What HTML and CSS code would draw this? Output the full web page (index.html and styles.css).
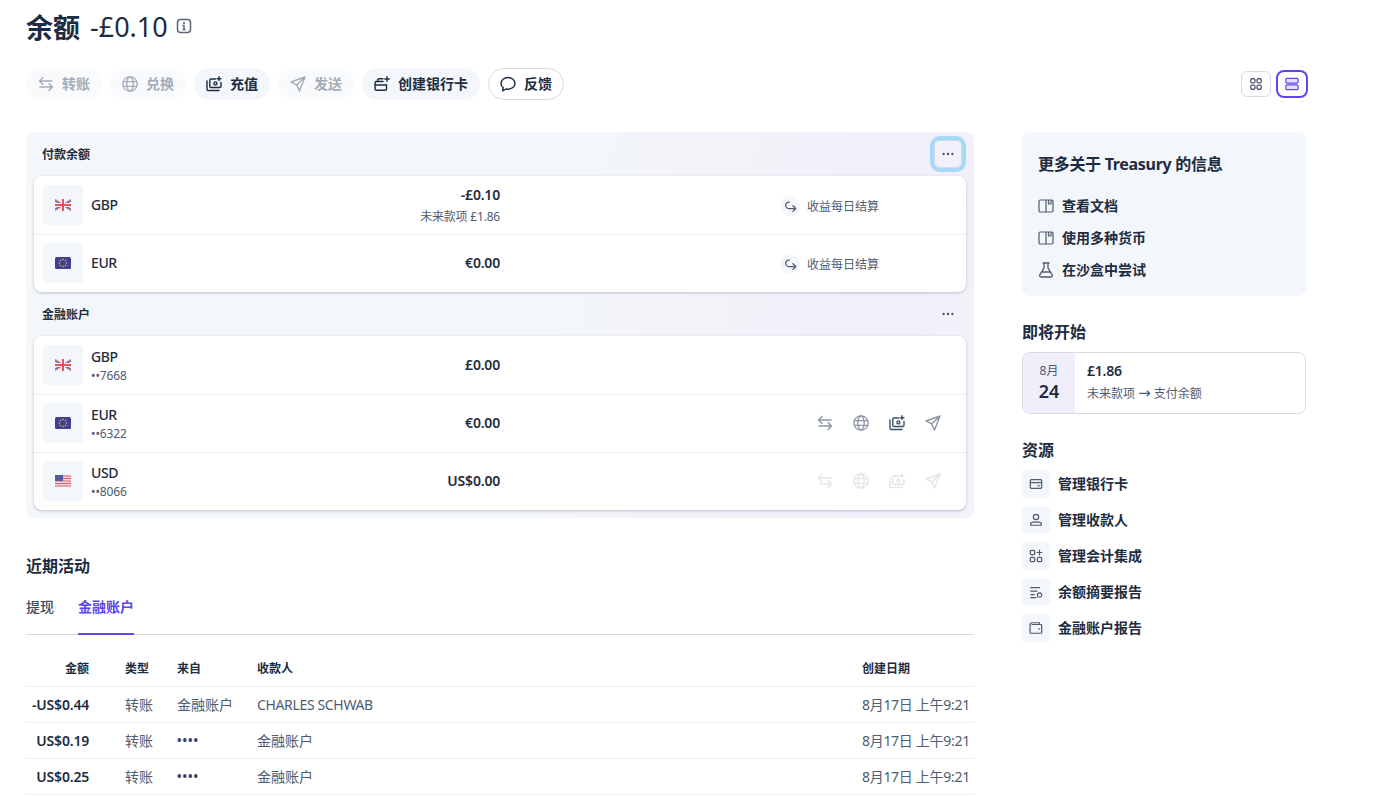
FILE: index.html
```html
<!DOCTYPE html>
<html lang="zh-CN">
  <head>
    <meta charset="UTF-8" />
    <title>余额</title>
    <link rel="stylesheet" href="styles.css">
  </head>
  <body>
    <svg class="sprite" width="0" height="0">
      <defs>
        <symbol id="i-transfer" viewBox="0 0 16 16"><path d="M5 1.500 1.500 5 5 8.500M1.500 5H14M11 7.500 14.500 11 11 14.500M14.500 11H2" fill="none" stroke="currentColor" stroke-width="1.400" stroke-linecap="round" stroke-linejoin="round"/></symbol>
        <symbol id="i-globe" viewBox="0 0 16 16"><g fill="none" stroke="currentColor" stroke-width="1.300"><circle cx="8" cy="8" r="7.200"/><ellipse cx="8" cy="8" rx="3.200" ry="7.200"/><path d="M1 5.600h14M1 10.400h14"/></g></symbol>
        <symbol id="i-topup" viewBox="0 0 16 16"><g fill="none" stroke="currentColor" stroke-width="1.400" stroke-linecap="round" stroke-linejoin="round"><path d="M1 5v8.300c0 .7.500 1.200 1.200 1.200H13"/><path d="M9.500 3H5a1.200 1.200 0 0 0-1.200 1.200v6.100c0 .7.500 1.200 1.200 1.200h8.800c.7 0 1.200-.5 1.200-1.200V6.500"/><circle cx="9.400" cy="7.400" r="1.500"/><path d="M13 .8v3.800M11.100 2.700h3.800"/></g></symbol>
        <symbol id="i-send" viewBox="0 0 16 16"><path d="M15 1 1 6l5.600 2.900L9.500 15 15 1ZM15 1 6.600 8.900" fill="none" stroke="currentColor" stroke-width="1.400" stroke-linejoin="round"/></symbol>
        <symbol id="i-newcard" viewBox="0 0 16 16"><g fill="none" stroke="currentColor" stroke-width="1.400" stroke-linecap="round" stroke-linejoin="round"><path d="M9 5.500H2.500c-.8 0-1.400.6-1.400 1.400v6c0 .8.600 1.400 1.400 1.400h8.600c.8 0 1.400-.6 1.400-1.400V9"/><path d="M1.200 9h11.200M3.600 5.400V4c0-.7.500-1.200 1.200-1.200H9"/><path d="M13 .8v4.400M10.800 3h4.400"/></g></symbol>
        <symbol id="i-chat" viewBox="0 0 16 16"><path d="M8 1.500c3.800 0 7 2.500 7 5.900s-3.200 5.800-7 5.800c-.7 0-1.300-.1-2-.2L2.600 14.800l.7-3.100C1.900 10.600 1 9.100 1 7.400 1 4 4.200 1.500 8 1.500Z" fill="none" stroke="currentColor" stroke-width="1.400" stroke-linejoin="round"/></symbol>
        <symbol id="i-return" viewBox="0 0 16 16"><path d="M11 7 14.500 10.500 11 14M14 10.500H6a4 4 0 0 1 0-8h.5" fill="none" stroke="currentColor" stroke-width="1.600" stroke-linecap="round" stroke-linejoin="round"/></symbol>
        <symbol id="i-dots" viewBox="0 0 16 16"><circle cx="3" cy="8" r="1.300" fill="currentColor"/><circle cx="8" cy="8" r="1.300" fill="currentColor"/><circle cx="13" cy="8" r="1.300" fill="currentColor"/></symbol>
        <symbol id="i-book" viewBox="0 0 16 16"><g fill="none" stroke="currentColor" stroke-width="1.200" stroke-linejoin="round"><rect x="1" y="2" width="14" height="12" rx="1.200"/><path d="M8 2v12M10.500 2v4h2.500V2"/></g></symbol>
        <symbol id="i-flask" viewBox="0 0 16 16"><path d="M5 1h6M6 1v5.200L1.800 12.800c-.6 1 .1 2.200 1.300 2.200h9.800c1.200 0 1.900-1.200 1.300-2.200L10 6.200V1M4 10h8" fill="none" stroke="currentColor" stroke-width="1.300" stroke-linecap="round" stroke-linejoin="round"/></symbol>
        <symbol id="i-card" viewBox="0 0 16 16"><g fill="none" stroke="currentColor" stroke-width="1.400" stroke-linecap="round"><rect x="1.500" y="3" width="13" height="10" rx="1.200"/><path d="M1.500 6.500h13M10 10h2"/></g></symbol>
        <symbol id="i-person" viewBox="0 0 16 16"><g fill="none" stroke="currentColor" stroke-width="1.400"><circle cx="8" cy="4.500" r="3"/><path d="M2 14v-1.200c0-1.200 1-2.300 2.300-2.300h7.400c1.300 0 2.300 1.100 2.300 2.300V14Z" stroke-linejoin="round"/></g></symbol>
        <symbol id="i-apps" viewBox="0 0 16 16"><g fill="none" stroke="currentColor" stroke-width="1.400" stroke-linecap="round"><rect x="1.500" y="1.500" width="5" height="5" rx="1.500"/><rect x="1.500" y="9.500" width="5" height="5" rx="1.500"/><rect x="9.500" y="9.500" width="5" height="5" rx="1.500"/><path d="M12 1.200v5.600M9.200 4h5.600"/></g></symbol>
        <symbol id="i-report" viewBox="0 0 16 16"><g fill="none" stroke="currentColor" stroke-width="1.300" stroke-linecap="round"><path d="M2 3h10M2 7h7M2 11h4M2 14.500h6"/><circle cx="12" cy="11.500" r="2.500"/></g></symbol>
        <symbol id="i-wallet" viewBox="0 0 16 16"><g fill="none" stroke="currentColor" stroke-width="1.400" stroke-linejoin="round"><path d="M3 4h10.500c.6 0 1 .4 1 1v8c0 .6-.4 1-1 1h-11c-.8 0-1.300-.5-1.300-1.300V4.300C1.200 3 2 2 3.300 2H12v2"/><path d="M11 9h.8" stroke-linecap="round"/></g></symbol>
        <symbol id="i-grid" viewBox="0 0 16 16"><g fill="none" stroke="currentColor" stroke-width="1.500"><rect x="2" y="2" width="4.800" height="4.800" rx="1.500"/><rect x="9.200" y="2" width="4.800" height="4.800" rx="1.500"/><rect x="2" y="9.200" width="4.800" height="4.800" rx="1.500"/><rect x="9.200" y="9.200" width="4.800" height="4.800" rx="1.500"/></g></symbol>
        <symbol id="i-rows" viewBox="0 0 16 16"><g fill="#e6e4ff" stroke="currentColor" stroke-width="1.400"><rect x="1" y="1.500" width="14" height="5.500" rx="1.500"/><rect x="1" y="9" width="14" height="5.500" rx="1.500"/></g></symbol>
        <symbol id="f-gb" viewBox="0 0 16 12"><rect width="16" height="12" rx="1" fill="#f4f5f8"/><path d="M0 1.500 16 10.500M16 1.500 0 10.500" stroke="#6a78b0" stroke-width="2"/><path d="M0 0 16 12M16 0 0 12" stroke="#e8636a" stroke-width=".8"/><path d="M8 0v12M0 6h16" stroke="#f4f5f8" stroke-width="4"/><path d="M8 0v12M0 6h16" stroke="#e8505a" stroke-width="2"/></symbol>
        <symbol id="f-eu" viewBox="0 0 16 12"><rect width="16" height="12" rx="1.500" fill="#3f4190"/><g fill="#d7bc5e"><circle cx="8" cy="2.500" r=".8"/><circle cx="8" cy="9.500" r=".8"/><circle cx="4.500" cy="6" r=".8"/><circle cx="11.500" cy="6" r=".8"/><circle cx="5.500" cy="3.500" r=".8"/><circle cx="10.500" cy="3.500" r=".8"/><circle cx="5.500" cy="8.500" r=".8"/><circle cx="10.500" cy="8.500" r=".8"/></g></symbol>
        <symbol id="f-us" viewBox="0 0 16 12"><rect width="16" height="12" rx="1" fill="#f7d9dc"/><path d="M0 1h16M0 3.500h16M0 6h16M0 8.500h16M0 11h16" stroke="#e8636a" stroke-width="1"/><rect width="8" height="6" fill="#5559a0"/></symbol>
      </defs>
    </svg>

    <div class="page">
      <header class="title-row">
        <h1>余额</h1>
        <span class="title-amount">-£0.10</span>
        <svg class="info-icon" viewBox="0 0 16 16"><rect x="1.500" y="1.500" width="13" height="13" rx="3" fill="none" stroke="currentColor" stroke-width="1.500"/><circle cx="8" cy="5" r="1" fill="currentColor"/><path d="M6.500 7.500H8v4M6.500 11.500h3" fill="none" stroke="currentColor" stroke-width="1.400"/></svg>
      </header>

      <div class="toolbar">
        <div class="actions">
          <button class="pill is-disabled"><svg class="pill-icon"><use href="#i-transfer"/></svg>转账</button>
          <button class="pill is-disabled"><svg class="pill-icon"><use href="#i-globe"/></svg>兑换</button>
          <button class="pill"><svg class="pill-icon"><use href="#i-topup"/></svg>充值</button>
          <button class="pill is-disabled"><svg class="pill-icon"><use href="#i-send"/></svg>发送</button>
          <button class="pill"><svg class="pill-icon"><use href="#i-newcard"/></svg>创建银行卡</button>
          <button class="pill pill-outline"><svg class="pill-icon"><use href="#i-chat"/></svg>反馈</button>
        </div>
        <div class="view-toggle">
          <button class="toggle"><svg class="toggle-icon"><use href="#i-grid"/></svg></button>
          <button class="toggle is-active"><svg class="toggle-icon"><use href="#i-rows"/></svg></button>
        </div>
      </div>

      <div class="columns">
        <main class="main-col">
          <section class="panel">
            <div class="panel-head">
              <h2>付款余额</h2>
              <button class="more is-focused"><svg class="more-icon"><use href="#i-dots"/></svg></button>
            </div>
            <div class="card">
              <div class="row">
                <div class="flag-box"><svg class="flag"><use href="#f-gb"/></svg></div>
                <div class="row-name"><div class="code">GBP</div></div>
                <div class="row-amount"><div class="amount">-£0.10</div><div class="sub">未来款项 £1.86</div></div>
                <div class="row-extra"><span class="return-badge"><svg class="return-icon"><use href="#i-return"/></svg></span><span class="sub">收益每日结算</span></div>
              </div>
              <div class="row">
                <div class="flag-box"><svg class="flag"><use href="#f-eu"/></svg></div>
                <div class="row-name"><div class="code">EUR</div></div>
                <div class="row-amount"><div class="amount">€0.00</div></div>
                <div class="row-extra"><span class="return-badge"><svg class="return-icon"><use href="#i-return"/></svg></span><span class="sub">收益每日结算</span></div>
              </div>
            </div>
            <div class="panel-head">
              <h2>金融账户</h2>
              <button class="more"><svg class="more-icon"><use href="#i-dots"/></svg></button>
            </div>
            <div class="card">
              <div class="row">
                <div class="flag-box"><svg class="flag"><use href="#f-gb"/></svg></div>
                <div class="row-name has-number"><div class="code">GBP</div><div class="sub">••7668</div></div>
                <div class="row-amount"><div class="amount">£0.00</div></div>
              </div>
              <div class="row">
                <div class="flag-box"><svg class="flag"><use href="#f-eu"/></svg></div>
                <div class="row-name has-number"><div class="code">EUR</div><div class="sub">••6322</div></div>
                <div class="row-amount"><div class="amount">€0.00</div></div>
                <div class="row-tools">
                  <svg class="tool"><use href="#i-transfer"/></svg>
                  <svg class="tool"><use href="#i-globe"/></svg>
                  <svg class="tool tool-on"><use href="#i-topup"/></svg>
                  <svg class="tool"><use href="#i-send"/></svg>
                </div>
              </div>
              <div class="row">
                <div class="flag-box"><svg class="flag"><use href="#f-us"/></svg></div>
                <div class="row-name has-number"><div class="code">USD</div><div class="sub">••8066</div></div>
                <div class="row-amount"><div class="amount">US$0.00</div></div>
                <div class="row-tools is-faded">
                  <svg class="tool"><use href="#i-transfer"/></svg>
                  <svg class="tool"><use href="#i-globe"/></svg>
                  <svg class="tool"><use href="#i-topup"/></svg>
                  <svg class="tool"><use href="#i-send"/></svg>
                </div>
              </div>
            </div>
          </section>

          <section class="recent">
            <h3>近期活动</h3>
            <div class="tabs">
              <span class="tab">提现</span>
              <span class="tab is-current">金融账户</span>
            </div>
            <div class="activity">
              <div class="activity-row activity-head">
                <span class="col-amount">金额</span><span>类型</span><span>来自</span><span>收款人</span><span>创建日期</span>
              </div>
              <div class="activity-row">
                <span class="col-amount">-US$0.44</span><span>转账</span><span>金融账户</span><span class="col-name">CHARLES SCHWAB</span><span class="col-date">8月17日 上午9:21</span>
              </div>
              <div class="activity-row">
                <span class="col-amount">US$0.19</span><span>转账</span><span class="masked">••••</span><span>金融账户</span><span class="col-date">8月17日 上午9:21</span>
              </div>
              <div class="activity-row">
                <span class="col-amount">US$0.25</span><span>转账</span><span class="masked">••••</span><span>金融账户</span><span class="col-date">8月17日 上午9:21</span>
              </div>
            </div>
          </section>
        </main>

        <aside class="side-col">
          <section class="info-box">
            <h3>更多关于 Treasury 的信息</h3>
            <a class="info-link"><svg class="link-icon"><use href="#i-book"/></svg>查看文档</a>
            <a class="info-link"><svg class="link-icon"><use href="#i-book"/></svg>使用多种货币</a>
            <a class="info-link"><svg class="link-icon"><use href="#i-flask"/></svg>在沙盒中尝试</a>
          </section>

          <section class="upcoming">
            <h3>即将开始</h3>
            <div class="event">
              <div class="event-date"><span class="month">8月</span><span class="day">24</span></div>
              <div class="event-body">
                <div class="amount">£1.86</div>
                <div class="sub event-sub">未来款项 <span class="arrow">→</span> 支付余额</div>
              </div>
            </div>
          </section>

          <section class="resources">
            <h3>资源</h3>
            <a class="res-link"><span class="res-box"><svg class="res-icon"><use href="#i-card"/></svg></span>管理银行卡</a>
            <a class="res-link"><span class="res-box"><svg class="res-icon"><use href="#i-person"/></svg></span>管理收款人</a>
            <a class="res-link"><span class="res-box"><svg class="res-icon"><use href="#i-apps"/></svg></span>管理会计集成</a>
            <a class="res-link"><span class="res-box"><svg class="res-icon"><use href="#i-report"/></svg></span>余额摘要报告</a>
            <a class="res-link"><span class="res-box"><svg class="res-icon"><use href="#i-wallet"/></svg></span>金融账户报告</a>
          </section>
        </aside>
      </div>
    </div>
  </body>
</html>
```

FILE: styles.css
```css
* {
  box-sizing: border-box;
}

body {
  margin: 0;
  background: #fff;
  color: #1d2c40;
  font-family: "Noto Sans", "Noto Sans CJK SC", sans-serif;
  font-size: 14px;
}

h1, h2, h3 {
  margin: 0;
}

button {
  font-family: inherit;
  border: none;
  cursor: pointer;
}

.sprite {
  position: absolute;
}

.page {
  width: 1392px;
  height: 797px;
  overflow: hidden;
  padding: 7px 84px 0 26px;
}

/* title */
.title-row {
  display: flex;
  align-items: center;
  height: 40px;
  padding-bottom: 2px;
}
.title-row h1 {
  font-size: 27px;
  font-weight: 700;
  margin-right: 10px;
}
.title-amount {
  font-size: 27px;
  margin-right: 8px;
}
.info-icon {
  width: 16px;
  height: 16px;
  color: #5c6675;
}

/* toolbar */
.toolbar {
  display: flex;
  justify-content: space-between;
  align-items: center;
  margin-top: 21px;
  height: 32px;
}
.actions {
  display: flex;
  gap: 8px;
}
.pill {
  display: flex;
  align-items: center;
  gap: 8px;
  height: 32px;
  padding: 0 12px 2px;
  border-radius: 16px;
  background: #f3f6fa;
  color: #1d2c40;
  font-size: 14px;
  font-weight: 700;
}
.pill-icon {
  width: 16px;
  height: 16px;
  flex: none;
  margin-bottom: -2px;
}
.pill.is-disabled {
  background: #f9fafc;
  color: #a3acb9;
}
.pill-outline {
  padding: 0 11px 2px;
  background: #fff;
  border: 1px solid #d5dbe6;
}
.view-toggle {
  display: flex;
  align-items: center;
  gap: 5px;
}
.toggle {
  display: flex;
  align-items: center;
  justify-content: center;
  width: 30px;
  height: 26px;
  padding: 0;
  background: #fff;
  border: 1px solid #d5dbe6;
  border-radius: 6px;
  color: #4f5b70;
}
.toggle.is-active {
  width: 32px;
  height: 28px;
  border: 2px solid #5b45f5;
  border-radius: 8px;
  color: #5b45f5;
}
.toggle-icon {
  width: 14px;
  height: 14px;
}

/* layout */
.columns {
  display: flex;
  gap: 48px;
  margin-top: 32px;
}
.main-col {
  width: 948px;
  flex: none;
}
.side-col {
  width: 284px;
  flex: none;
}

/* balances panel */
.panel {
  padding: 0 8px 8px;
  border-radius: 8px;
  background: linear-gradient(100deg, #f3f6fa 55%, #f1eff9 88%, #f3f1f9 100%);
}
.panel-head {
  display: flex;
  justify-content: space-between;
  align-items: center;
  height: 44px;
  padding: 0 4px 0 8px;
}
.panel-head h2 {
  font-size: 12px;
  font-weight: 700;
}
.more {
  display: flex;
  align-items: center;
  justify-content: center;
  width: 28px;
  height: 28px;
  padding: 0;
  background: transparent;
  border-radius: 6px;
  color: #414d60;
}
.more.is-focused {
  border: 1px solid #d5dbe6;
  box-shadow: 0 0 0 4px #a6d8f7;
}
.more-icon {
  width: 14px;
  height: 14px;
}
.card {
  background: #fff;
  border-radius: 8px;
  box-shadow: 0 1px 3px rgba(50, 60, 90, 0.28);
}
.row {
  display: flex;
  align-items: center;
  height: 58px;
  padding-left: 9px;
}
.row + .row {
  box-shadow: inset 0 1px 0 #ebeef3;
}
.flag-box {
  display: flex;
  align-items: center;
  justify-content: center;
  width: 40px;
  height: 40px;
  flex: none;
  background: #f3f6fa;
  border-radius: 4px;
}
.flag {
  width: 16px;
  height: 12px;
}
.row-name {
  width: 140px;
  margin-left: 8px;
  flex: none;
}
.row-name.has-number {
  padding-top: 3px;
}
.has-number .sub {
  margin-top: 1px;
  letter-spacing: -0.1px;
}
.code {
  font-size: 14px;
  font-weight: 500;
  line-height: 18px;
  letter-spacing: -0.4px;
}
.sub {
  font-size: 12px;
  line-height: 18px;
  color: #4f5b70;
}
.row-amount {
  width: 269px;
  flex: none;
  text-align: right;
}
.amount {
  font-size: 14px;
  font-weight: 600;
  line-height: 20px;
  letter-spacing: -0.2px;
}
.row-amount .sub {
  margin-top: 3px;
  margin-bottom: -1px;
  letter-spacing: -0.2px;
}
.row-extra {
  display: flex;
  align-items: center;
  gap: 7px;
  margin-left: 280px;
  padding-top: 2px;
}
.row-extra .sub {
  padding-top: 2px;
}
.return-badge {
  display: flex;
  align-items: center;
  justify-content: center;
  width: 20px;
  height: 20px;
  background: #f3f6fa;
  border-radius: 50%;
  color: #4f5b70;
}
.return-icon {
  width: 13px;
  height: 13px;
}
.row-tools {
  display: flex;
  gap: 20px;
  margin-left: 317px;
  color: #8c96a6;
}
.tool {
  width: 16px;
  height: 16px;
}
.tool-on {
  color: #414d60;
}
.row-tools.is-faded {
  color: #e2e5ea;
}

/* recent activity */
.recent h3,
.side-col h3 {
  font-size: 16px;
  font-weight: 700;
}
.recent {
  margin-top: 38px;
}
.recent h3 {
  line-height: 20px;
}
.tabs {
  display: flex;
  gap: 24px;
  height: 59px;
  border-bottom: 1px solid #d5dbe6;
}
.tab {
  padding-top: 20px;
  font-size: 14px;
  font-weight: 500;
  color: #414d60;
}
.tab.is-current {
  color: #5b45f5;
  font-weight: 700;
  border-bottom: 2px solid #5b45f5;
  margin-bottom: -1px;
}
.activity {
  margin-top: 16px;
}
.activity-row {
  display: grid;
  grid-template-columns: 99px 52px 80px 605px 112px;
  align-items: center;
  height: 36px;
  line-height: 20px;
  border-bottom: 1px solid #ebeef3;
  color: #4f5b70;
}
.activity-head {
  font-size: 12px;
  font-weight: 700;
  color: #1d2c40;
}
.col-amount {
  padding-right: 36px;
  text-align: right;
  color: #1d2c40;
  font-weight: 600;
  letter-spacing: -0.2px;
}
.activity-head .col-amount {
  font-weight: 700;
  letter-spacing: 0;
}
.col-name {
  letter-spacing: -0.35px;
}
.col-date {
  letter-spacing: -0.3px;
  white-space: nowrap;
}
.masked {
  color: #3c3f6b;
  font-size: 12px;
  font-weight: 700;
  letter-spacing: 1px;
}

/* side column */
.info-box {
  height: 164px;
  padding: 20px 16px 0;
  background: #f3f6fa;
  border-radius: 8px;
}
.info-box h3 {
  line-height: 24px;
  margin-bottom: 14px;
  letter-spacing: -0.3px;
}
.info-link {
  display: flex;
  align-items: center;
  gap: 8px;
  height: 32px;
  padding-bottom: 2px;
  font-size: 14px;
  font-weight: 600;
}
.link-icon {
  width: 16px;
  height: 16px;
  margin-bottom: -2px;
  color: #4f5b70;
}
.upcoming {
  margin-top: 26px;
}
.upcoming h3,
.resources h3 {
  line-height: 20px;
}
.event {
  display: flex;
  height: 62px;
  margin-top: 10px;
  border: 1px solid #d5dbe6;
  border-radius: 8px;
  overflow: hidden;
}
.event-date {
  display: flex;
  flex-direction: column;
  align-items: center;
  justify-content: center;
  width: 52px;
  flex: none;
  background: #f0eefb;
}
.month {
  font-size: 12px;
  line-height: 16px;
  color: #4f5b70;
}
.day {
  font-size: 18px;
  font-weight: 600;
  line-height: 24px;
}
.event-body {
  padding: 8px 12px;
}
.event-sub {
  margin-top: 4px;
}
.arrow {
  font-family: "DejaVu Sans", sans-serif;
  font-size: 15px;
  line-height: 16px;
}
.resources {
  margin-top: 26px;
}
.resources h3 {
  margin-bottom: 10px;
}
.res-link {
  display: flex;
  align-items: center;
  gap: 8px;
  height: 28px;
  margin-bottom: 8px;
  padding-bottom: 2px;
  font-size: 14px;
  font-weight: 600;
}
.res-box {
  display: flex;
  align-items: center;
  justify-content: center;
  flex: none;
  width: 28px;
  height: 28px;
  margin-bottom: -2px;
  background: #f3f6fa;
  border-radius: 4px;
  color: #4f5b70;
}
.res-icon {
  width: 14px;
  height: 14px;
}
```
